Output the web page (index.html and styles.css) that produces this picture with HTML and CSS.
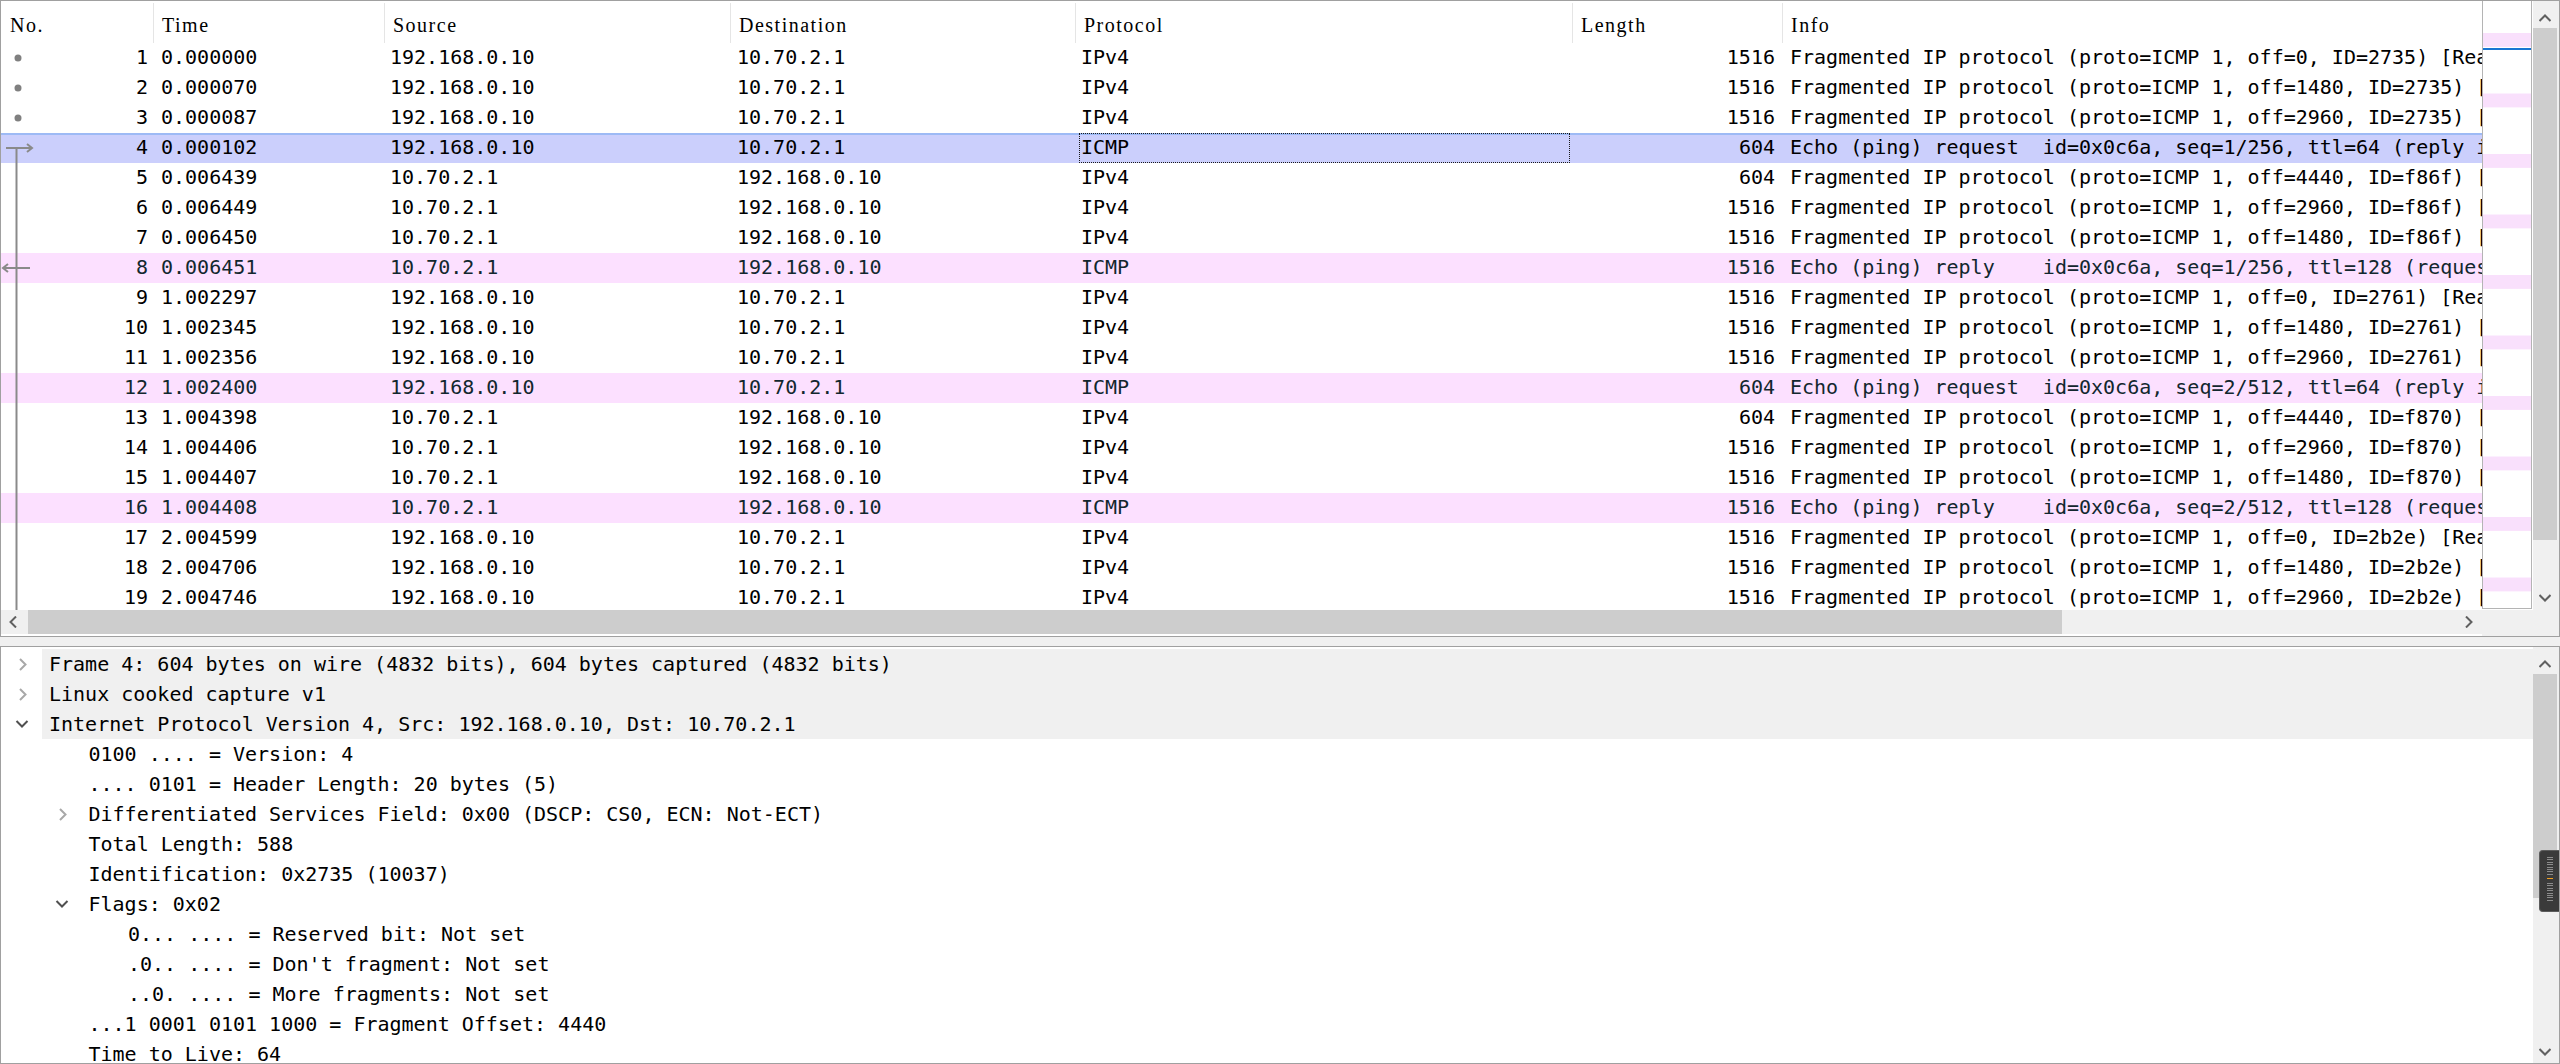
FILE: index.html
```html
<!DOCTYPE html>
<html>
<head>
<meta charset="utf-8">
<title>Packets</title>
<link rel="stylesheet" href="styles.css">
</head>
<body>
<section class="plist">
  <div class="plist-top">
    <div class="view">
      <div class="phead">
        <span>No.</span><span>Time</span><span>Source</span><span>Destination</span><span>Protocol</span><span>Length</span><span>Info</span>
      </div>
      <div class="pbody">
        <div class="pkt"><span class="c-no"><svg class="mk" viewBox="0 0 36 30"><circle class="dot" cx="17" cy="15" r="3.5"/></svg><b>1</b></span><span class="c-time">0.000000</span><span class="c-src">192.168.0.10</span><span class="c-dst">10.70.2.1</span><span class="c-proto">IPv4</span><span class="c-len">1516</span><span class="c-info">Fragmented IP protocol (proto=ICMP 1, off=0, ID=2735) [Reassembled in #4]</span></div>
        <div class="pkt"><span class="c-no"><svg class="mk" viewBox="0 0 36 30"><circle class="dot" cx="17" cy="15" r="3.5"/></svg><b>2</b></span><span class="c-time">0.000070</span><span class="c-src">192.168.0.10</span><span class="c-dst">10.70.2.1</span><span class="c-proto">IPv4</span><span class="c-len">1516</span><span class="c-info">Fragmented IP protocol (proto=ICMP 1, off=1480, ID=2735) [Reassembled in #4]</span></div>
        <div class="pkt"><span class="c-no"><svg class="mk" viewBox="0 0 36 30"><circle class="dot" cx="17" cy="15" r="3.5"/></svg><b>3</b></span><span class="c-time">0.000087</span><span class="c-src">192.168.0.10</span><span class="c-dst">10.70.2.1</span><span class="c-proto">IPv4</span><span class="c-len">1516</span><span class="c-info">Fragmented IP protocol (proto=ICMP 1, off=2960, ID=2735) [Reassembled in #4]</span></div>
        <div class="pkt sel"><span class="c-no"><svg class="mk" viewBox="0 0 36 30"><path d="M5 15H31M26 11L31 15L26 19M15.5 15V30"/></svg><b>4</b></span><span class="c-time">0.000102</span><span class="c-src">192.168.0.10</span><span class="c-dst">10.70.2.1</span><span class="c-proto focus">ICMP</span><span class="c-len">604</span><span class="c-info">Echo (ping) request  id=0x0c6a, seq=1/256, ttl=64 (reply in 8)</span></div>
        <div class="pkt"><span class="c-no"><svg class="mk" viewBox="0 0 36 30"><path d="M15.5 0V30"/></svg><b>5</b></span><span class="c-time">0.006439</span><span class="c-src">10.70.2.1</span><span class="c-dst">192.168.0.10</span><span class="c-proto">IPv4</span><span class="c-len">604</span><span class="c-info">Fragmented IP protocol (proto=ICMP 1, off=4440, ID=f86f) [Reassembled in #8]</span></div>
        <div class="pkt"><span class="c-no"><svg class="mk" viewBox="0 0 36 30"><path d="M15.5 0V30"/></svg><b>6</b></span><span class="c-time">0.006449</span><span class="c-src">10.70.2.1</span><span class="c-dst">192.168.0.10</span><span class="c-proto">IPv4</span><span class="c-len">1516</span><span class="c-info">Fragmented IP protocol (proto=ICMP 1, off=2960, ID=f86f) [Reassembled in #8]</span></div>
        <div class="pkt"><span class="c-no"><svg class="mk" viewBox="0 0 36 30"><path d="M15.5 0V30"/></svg><b>7</b></span><span class="c-time">0.006450</span><span class="c-src">10.70.2.1</span><span class="c-dst">192.168.0.10</span><span class="c-proto">IPv4</span><span class="c-len">1516</span><span class="c-info">Fragmented IP protocol (proto=ICMP 1, off=1480, ID=f86f) [Reassembled in #8]</span></div>
        <div class="pkt icmp"><span class="c-no"><svg class="mk" viewBox="0 0 36 30"><path d="M2 15H29M7 11L2 15L7 19M15.5 0V30"/></svg><b>8</b></span><span class="c-time">0.006451</span><span class="c-src">10.70.2.1</span><span class="c-dst">192.168.0.10</span><span class="c-proto">ICMP</span><span class="c-len">1516</span><span class="c-info">Echo (ping) reply    id=0x0c6a, seq=1/256, ttl=128 (request in 4)</span></div>
        <div class="pkt"><span class="c-no"><svg class="mk" viewBox="0 0 36 30"><path d="M15.5 0V30"/></svg><b>9</b></span><span class="c-time">1.002297</span><span class="c-src">192.168.0.10</span><span class="c-dst">10.70.2.1</span><span class="c-proto">IPv4</span><span class="c-len">1516</span><span class="c-info">Fragmented IP protocol (proto=ICMP 1, off=0, ID=2761) [Reassembled in #12]</span></div>
        <div class="pkt"><span class="c-no"><svg class="mk" viewBox="0 0 36 30"><path d="M15.5 0V30"/></svg><b>10</b></span><span class="c-time">1.002345</span><span class="c-src">192.168.0.10</span><span class="c-dst">10.70.2.1</span><span class="c-proto">IPv4</span><span class="c-len">1516</span><span class="c-info">Fragmented IP protocol (proto=ICMP 1, off=1480, ID=2761) [Reassembled in #12]</span></div>
        <div class="pkt"><span class="c-no"><svg class="mk" viewBox="0 0 36 30"><path d="M15.5 0V30"/></svg><b>11</b></span><span class="c-time">1.002356</span><span class="c-src">192.168.0.10</span><span class="c-dst">10.70.2.1</span><span class="c-proto">IPv4</span><span class="c-len">1516</span><span class="c-info">Fragmented IP protocol (proto=ICMP 1, off=2960, ID=2761) [Reassembled in #12]</span></div>
        <div class="pkt icmp"><span class="c-no"><svg class="mk" viewBox="0 0 36 30"><path d="M15.5 0V30"/></svg><b>12</b></span><span class="c-time">1.002400</span><span class="c-src">192.168.0.10</span><span class="c-dst">10.70.2.1</span><span class="c-proto">ICMP</span><span class="c-len">604</span><span class="c-info">Echo (ping) request  id=0x0c6a, seq=2/512, ttl=64 (reply in 16)</span></div>
        <div class="pkt"><span class="c-no"><svg class="mk" viewBox="0 0 36 30"><path d="M15.5 0V30"/></svg><b>13</b></span><span class="c-time">1.004398</span><span class="c-src">10.70.2.1</span><span class="c-dst">192.168.0.10</span><span class="c-proto">IPv4</span><span class="c-len">604</span><span class="c-info">Fragmented IP protocol (proto=ICMP 1, off=4440, ID=f870) [Reassembled in #16]</span></div>
        <div class="pkt"><span class="c-no"><svg class="mk" viewBox="0 0 36 30"><path d="M15.5 0V30"/></svg><b>14</b></span><span class="c-time">1.004406</span><span class="c-src">10.70.2.1</span><span class="c-dst">192.168.0.10</span><span class="c-proto">IPv4</span><span class="c-len">1516</span><span class="c-info">Fragmented IP protocol (proto=ICMP 1, off=2960, ID=f870) [Reassembled in #16]</span></div>
        <div class="pkt"><span class="c-no"><svg class="mk" viewBox="0 0 36 30"><path d="M15.5 0V30"/></svg><b>15</b></span><span class="c-time">1.004407</span><span class="c-src">10.70.2.1</span><span class="c-dst">192.168.0.10</span><span class="c-proto">IPv4</span><span class="c-len">1516</span><span class="c-info">Fragmented IP protocol (proto=ICMP 1, off=1480, ID=f870) [Reassembled in #16]</span></div>
        <div class="pkt icmp"><span class="c-no"><svg class="mk" viewBox="0 0 36 30"><path d="M15.5 0V30"/></svg><b>16</b></span><span class="c-time">1.004408</span><span class="c-src">10.70.2.1</span><span class="c-dst">192.168.0.10</span><span class="c-proto">ICMP</span><span class="c-len">1516</span><span class="c-info">Echo (ping) reply    id=0x0c6a, seq=2/512, ttl=128 (request in 12)</span></div>
        <div class="pkt"><span class="c-no"><svg class="mk" viewBox="0 0 36 30"><path d="M15.5 0V30"/></svg><b>17</b></span><span class="c-time">2.004599</span><span class="c-src">192.168.0.10</span><span class="c-dst">10.70.2.1</span><span class="c-proto">IPv4</span><span class="c-len">1516</span><span class="c-info">Fragmented IP protocol (proto=ICMP 1, off=0, ID=2b2e) [Reassembled in #20]</span></div>
        <div class="pkt"><span class="c-no"><svg class="mk" viewBox="0 0 36 30"><path d="M15.5 0V30"/></svg><b>18</b></span><span class="c-time">2.004706</span><span class="c-src">192.168.0.10</span><span class="c-dst">10.70.2.1</span><span class="c-proto">IPv4</span><span class="c-len">1516</span><span class="c-info">Fragmented IP protocol (proto=ICMP 1, off=1480, ID=2b2e) [Reassembled in #20]</span></div>
        <div class="pkt"><span class="c-no"><svg class="mk" viewBox="0 0 36 30"><path d="M15.5 0V30"/></svg><b>19</b></span><span class="c-time">2.004746</span><span class="c-src">192.168.0.10</span><span class="c-dst">10.70.2.1</span><span class="c-proto">IPv4</span><span class="c-len">1516</span><span class="c-info">Fragmented IP protocol (proto=ICMP 1, off=2960, ID=2b2e) [Reassembled in #20]</span></div>
      </div>
    </div>
    <div class="minimap"><div class="mm-cur"></div></div>
    <div class="vscroll">
      <div class="sb-up"><svg width="12" height="8" viewBox="0 0 12 8"><polyline points="0.5,7 6,1.5 11.5,7"/></svg></div>
      <div class="sb-thumb list-thumb"></div>
      <div class="sb-fill"></div>
      <div class="sb-down"><svg width="12" height="8" viewBox="0 0 12 8"><polyline points="0.5,1 6,6.5 11.5,1"/></svg></div>
    </div>
  </div>
  <div class="plist-foot">
    <div class="hscroll">
      <div class="sb-left"><svg width="8" height="12" viewBox="0 0 8 12"><polyline points="7,0.5 1.5,6 7,11.5"/></svg></div>
      <div class="h-thumb"></div>
      <div class="sb-fill"></div>
      <div class="sb-right"><svg width="8" height="12" viewBox="0 0 8 12"><polyline points="1,0.5 6.5,6 1,11.5"/></svg></div>
    </div>
    <div class="corner"></div>
  </div>
</section>

<div class="splitter"></div>

<section class="details">
  <div class="tree">
    <div class="node l1 hl"><span class="tog"><svg viewBox="0 0 41 30"><polyline class="closed" points="19,10 24.5,15.5 19,21"/></svg></span><span class="lbl">Frame 4: 604 bytes on wire (4832 bits), 604 bytes captured (4832 bits)</span></div>
    <div class="node l1 hl"><span class="tog"><svg viewBox="0 0 41 30"><polyline class="closed" points="19,10 24.5,15.5 19,21"/></svg></span><span class="lbl">Linux cooked capture v1</span></div>
    <div class="node l1 hl"><span class="tog"><svg viewBox="0 0 41 30"><polyline class="open" points="15.5,12 21,17.5 26.5,12"/></svg></span><span class="lbl">Internet Protocol Version 4, Src: 192.168.0.10, Dst: 10.70.2.1</span></div>
    <div class="node l2"><span class="tog"></span><span class="lbl">0100 .... = Version: 4</span></div>
    <div class="node l2"><span class="tog"></span><span class="lbl">.... 0101 = Header Length: 20 bytes (5)</span></div>
    <div class="node l2"><span class="tog"><svg viewBox="0 0 41 30"><polyline class="closed" points="19,10 24.5,15.5 19,21"/></svg></span><span class="lbl">Differentiated Services Field: 0x00 (DSCP: CS0, ECN: Not-ECT)</span></div>
    <div class="node l2"><span class="tog"></span><span class="lbl">Total Length: 588</span></div>
    <div class="node l2"><span class="tog"></span><span class="lbl">Identification: 0x2735 (10037)</span></div>
    <div class="node l2"><span class="tog"><svg viewBox="0 0 41 30"><polyline class="open" points="15.5,12 21,17.5 26.5,12"/></svg></span><span class="lbl">Flags: 0x02</span></div>
    <div class="node l3"><span class="tog"></span><span class="lbl">0... .... = Reserved bit: Not set</span></div>
    <div class="node l3"><span class="tog"></span><span class="lbl">.0.. .... = Don't fragment: Not set</span></div>
    <div class="node l3"><span class="tog"></span><span class="lbl">..0. .... = More fragments: Not set</span></div>
    <div class="node l2"><span class="tog"></span><span class="lbl">...1 0001 0101 1000 = Fragment Offset: 4440</span></div>
    <div class="node l2"><span class="tog"></span><span class="lbl">Time to Live: 64</span></div>
    <div class="node l2"><span class="tog"><svg viewBox="0 0 41 30"><polyline class="closed" points="19,10 24.5,15.5 19,21"/></svg></span><span class="lbl">Protocol: ICMP (1)</span></div>
  </div>
  <div class="vscroll dscroll">
    <div class="sb-up"><svg width="12" height="8" viewBox="0 0 12 8"><polyline points="0.5,7 6,1.5 11.5,7"/></svg></div>
    <div class="sb-thumb detail-thumb"></div>
    <div class="sb-fill"></div>
    <div class="sb-down"><svg width="12" height="8" viewBox="0 0 12 8"><polyline points="0.5,1 6,6.5 11.5,1"/></svg></div>
  </div>
  <div class="dock-tab">
    <div class="ticks"></div>
    <div class="tick-mark"></div>
    <div class="ticks"></div>
  </div>
</section>
</body>
</html>
```

FILE: styles.css
```css
html, body {
  margin: 0;
  padding: 0;
}
body {
  width: 2560px;
  height: 1064px;
  overflow: hidden;
  background: #f0f0f0;
  font-family: "DejaVu Sans Mono", "Liberation Mono", monospace;
  font-size: 20px;
  color: #000;
}

/* ---------- packet list ---------- */
.plist {
  box-sizing: border-box;
  height: 637px;
  border: 1px solid #a0a0a0;
  background: #fff;
  display: flex;
  flex-direction: column;
}
.plist-top {
  display: flex;
  height: 609px;
}
.view {
  width: 2481px;
  flex: none;
  display: flex;
  flex-direction: column;
  overflow: hidden;
  background: #fff;
}
.phead {
  box-sizing: border-box;
  height: 42px;
  padding-top: 2px;
  display: grid;
  grid-template-columns: 152px 231px 346px 345px 497px 210px 1fr;
  font-family: "Liberation Serif", "DejaVu Serif", serif;
  font-size: 20px;
  letter-spacing: 1.5px;
  color: #000;
  flex: none;
}
.phead span {
  padding: 4px 0 0 8px;
  line-height: 36px;
  border-left: 1px solid #e5e5e5;
  white-space: nowrap;
  overflow: hidden;
}
.phead span:first-child {
  border-left: none;
  padding-left: 9px;
}
.pbody {
  flex: 1;
  overflow: hidden;
}
.pkt {
  display: grid;
  grid-template-columns: 152px 231px 346px 345px 497px 210px 1fr;
  height: 30px;
  line-height: 28px;
  white-space: pre;
  color: #000;
}
.pkt > span {
  overflow: hidden;
}
.pkt.icmp {
  background: #fce0ff;
  color: #12272e;
}
.pkt.sel {
  background: #cbcffc;
  box-shadow: inset 0 2px 0 #9dbaf5;
}
.c-no {
  display: flex;
  justify-content: space-between;
  padding-right: 5px;
}
.c-no b {
  font-weight: normal;
}
.mk {
  width: 36px;
  height: 30px;
  flex: none;
}
.mk path {
  fill: none;
  stroke: #8a8a8a;
  stroke-width: 2;
}
.mk .dot {
  fill: #808080;
}
.c-time { padding-left: 8px; }
.c-src { padding-left: 6px; }
.c-dst { padding-left: 7px; }
.c-proto { padding-left: 6px; }
.c-len { text-align: right; padding-right: 7px; }
.c-info { padding-left: 8px; }
.c-proto.focus {
  border: 1px dotted #1a1a1a;
  margin: 0 2px 0 4px;
  padding-left: 1px;
  line-height: 26px;
}

/* minimap */
.minimap {
  box-sizing: border-box;
  width: 50px;
  height: 608px;
  flex: none;
  margin-right: 1px;
  border: 1px solid #b4b4b4;
  border-top: none;
  background: linear-gradient(#f9e0fc 0 14px, #fff 14px) 0 32px / 100% 60.5px repeat-y;
  background-color: #fff;
  padding-top: 47px;
}
.mm-cur {
  height: 2px;
  background: #1976d2;
}

/* scrollbars */
.vscroll {
  width: 26px;
  flex: none;
  background: #f0f0f0;
  display: flex;
  flex-direction: column;
}
.sb-up {
  height: 27px;
  flex: none;
  box-sizing: border-box;
  padding: 13px 0 0 6px;
}
.sb-up svg, .sb-down svg, .sb-left svg, .sb-right svg {
  display: block;
}
.vscroll polyline, .hscroll polyline {
  fill: none;
  stroke: #606060;
  stroke-width: 2;
}
.sb-thumb {
  width: 24px;
  background: #cdcdcd;
  flex: none;
}
.list-thumb { height: 512px; }
.sb-fill { flex: 1; }
.sb-down {
  height: 24px;
  flex: none;
  box-sizing: border-box;
  padding: 8px 0 0 6px;
}
.plist-foot {
  display: flex;
  height: 26px;
}
.hscroll {
  width: 2481px;
  flex: none;
  height: 24px;
  display: flex;
  background: #f0f0f0;
}
.sb-left {
  width: 27px;
  flex: none;
  box-sizing: border-box;
  padding: 6px 0 0 8px;
}
.h-thumb {
  width: 2034px;
  background: #cdcdcd;
  flex: none;
}
.sb-right {
  width: 27px;
  flex: none;
  box-sizing: border-box;
  padding: 6px 0 0 10px;
}
.corner {
  flex: 1;
  background: #f0f0f0;
}

.splitter {
  height: 9px;
}

/* ---------- details ---------- */
.details {
  position: relative;
  box-sizing: border-box;
  height: 418px;
  border: 1px solid #a0a0a0;
  background: #fff;
  display: flex;
  overflow: hidden;
}
.tree {
  width: 2532px;
  flex: none;
  padding-top: 2px;
  overflow: hidden;
}
.node {
  display: flex;
  height: 30px;
  line-height: 30px;
  white-space: pre;
}
.l2 { padding-left: 39.5px; }
.l3 { padding-left: 79px; }
.tog {
  width: 41px;
  height: 30px;
  flex: none;
}
.tog svg {
  display: block;
  width: 41px;
  height: 30px;
}
.tog polyline {
  fill: none;
  stroke-width: 2;
}
.tog .closed { stroke: #a8a8a8; }
.tog .open { stroke: #505050; }
.lbl {
  flex: 1;
  padding-left: 7px;
}
.hl .lbl {
  background: #f0f0f0;
}
.dscroll {
  flex: 1;
}
.detail-thumb { height: 224px; }
.dscroll .sb-down { padding-top: 9px; }

/* docked side tab overlay */
.dock-tab {
  position: absolute;
  top: 203px;
  right: -1px;
  width: 21px;
  height: 62px;
  box-sizing: border-box;
  background: #3a3a3a;
  border: 1px solid #5c5c5c;
  border-right: none;
  border-radius: 4px 0 0 4px;
  padding: 6px 0 0 7px;
}
.ticks {
  width: 6px;
  height: 19px;
  background: repeating-linear-gradient(#8c8c8c 0 1px, transparent 1px 2.4px);
}
.tick-mark {
  width: 6px;
  height: 1px;
  margin: 2px 0 4px;
  background: #f0a020;
}
```
